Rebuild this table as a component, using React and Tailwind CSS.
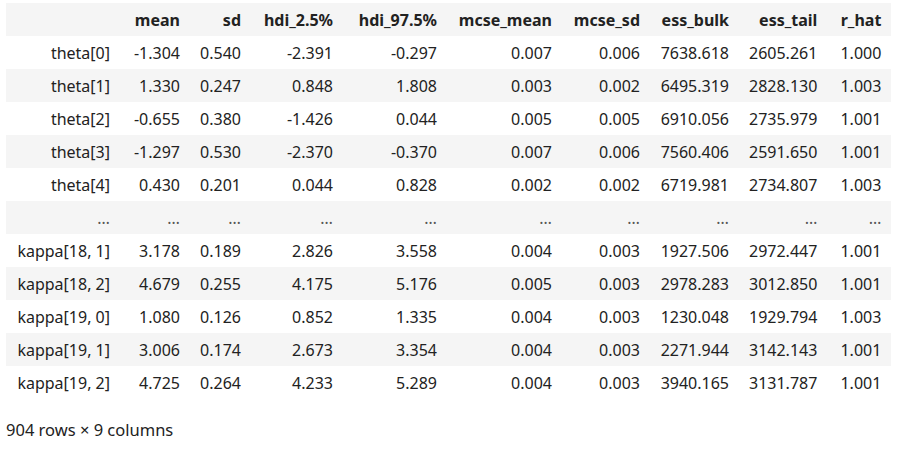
const columns = [
  { key: "mean", w: "w-[70px]" },
  { key: "sd", w: "w-[61px]" },
  { key: "hdi_2.5%", w: "w-[92px]" },
  { key: "hdi_97.5%", w: "w-[104px]" },
  { key: "mcse_mean", w: "w-[115px]" },
  { key: "mcse_sd", w: "w-[88px]" },
  { key: "ess_bulk", w: "w-[89px]" },
  { key: "ess_tail", w: "w-[88px]" },
  { key: "r_hat", w: "w-[64px]" },
]

const rows = [
  ["theta[0]", "-1.304", "0.540", "-2.391", "-0.297", "0.007", "0.006", "7638.618", "2605.261", "1.000"],
  ["theta[1]", "1.330", "0.247", "0.848", "1.808", "0.003", "0.002", "6495.319", "2828.130", "1.003"],
  ["theta[2]", "-0.655", "0.380", "-1.426", "0.044", "0.005", "0.005", "6910.056", "2735.979", "1.001"],
  ["theta[3]", "-1.297", "0.530", "-2.370", "-0.370", "0.007", "0.006", "7560.406", "2591.650", "1.001"],
  ["theta[4]", "0.430", "0.201", "0.044", "0.828", "0.002", "0.002", "6719.981", "2734.807", "1.003"],
  ["...", "...", "...", "...", "...", "...", "...", "...", "...", "..."],
  ["kappa[18, 1]", "3.178", "0.189", "2.826", "3.558", "0.004", "0.003", "1927.506", "2972.447", "1.001"],
  ["kappa[18, 2]", "4.679", "0.255", "4.175", "5.176", "0.005", "0.003", "2978.283", "3012.850", "1.001"],
  ["kappa[19, 0]", "1.080", "0.126", "0.852", "1.335", "0.004", "0.003", "1230.048", "1929.794", "1.003"],
  ["kappa[19, 1]", "3.006", "0.174", "2.673", "3.354", "0.004", "0.003", "2271.944", "3142.143", "1.001"],
  ["kappa[19, 2]", "4.725", "0.264", "4.233", "5.289", "0.004", "0.003", "3940.165", "3131.787", "1.001"],
]

export default function App() {
  return (
    <div className="w-[897px] h-[450px] bg-white pl-[6px] pt-[3px] text-[16px] text-[#222] font-['Noto_Sans',sans-serif]">
      <table className="table-fixed border-collapse">
        <thead>
          <tr className="bg-[#f5f5f5] h-[33px]">
            <th className="w-[114px]" />
            {columns.map((c) => (
              <th key={c.key} className={`${c.w} px-[10px] text-right font-bold whitespace-nowrap`}>
                {c.key}
              </th>
            ))}
          </tr>
        </thead>
        <tbody>
          {rows.map((r, i) => (
            <tr key={i} className={`h-[33px] ${i % 2 === 1 ? "bg-[#f5f5f5]" : "bg-white"}`}>
              {r.map((v, j) => (
                <td key={j} className={`px-[10px] text-right whitespace-nowrap ${v === "..." ? "text-[#555]" : ""}`}>
                  {v === "..." ? "…" : v}
                </td>
              ))}
            </tr>
          ))}
        </tbody>
      </table>
      <p className="mt-[19px] text-[16.5px]">904 rows × 9 columns</p>
    </div>
  )
}
